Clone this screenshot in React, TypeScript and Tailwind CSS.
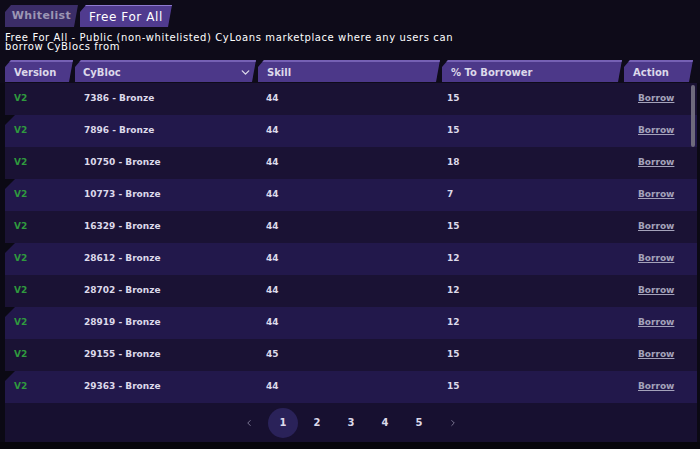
import { ChevronDown, ChevronLeft, ChevronRight } from 'lucide-react'

const rows = [
  { id: '7386', skill: 44, pct: 15 },
  { id: '7896', skill: 44, pct: 15 },
  { id: '10750', skill: 44, pct: 18 },
  { id: '10773', skill: 44, pct: 7 },
  { id: '16329', skill: 44, pct: 15 },
  { id: '28612', skill: 44, pct: 12 },
  { id: '28702', skill: 44, pct: 12 },
  { id: '28919', skill: 44, pct: 12 },
  { id: '29155', skill: 45, pct: 15 },
  { id: '29363', skill: 44, pct: 15 },
]

const cut = '[clip-path:polygon(6px_0,100%_0,calc(100%-4px)_100%,0_100%,0_7px)]'

export default function App() {
  return (
    <div className="h-[449px] w-[700px] overflow-hidden bg-[#07060c] text-[#dcd9ea] [font-family:'DejaVu_Sans',sans-serif]">
      <div className="bg-[#0e0b19] pt-[5px]">
        {/* tabs */}
        <div className="flex gap-[2px] pl-[5px]">
          <button className={`h-[22px] w-[73px] bg-[#3b2d68] text-[11px] font-bold tracking-[0.4px] text-[#9c96b4] ${cut}`}>
            Whitelist
          </button>
          <button className={`h-[22px] w-[92px] border-t border-[#8f7ad0] bg-[#503b8f] text-[12px] tracking-[0.6px] text-white ${cut}`}>
            Free For All
          </button>
        </div>

        <p className="mt-[6px] w-[462px] pl-[5px] text-[10px] leading-[9px] tracking-[0.6px] text-white">
          Free For All - Public (non-whitelisted) CyLoans marketplace where any users can borrow CyBlocs from
        </p>

        {/* header */}
        <div className="mt-[9px] grid grid-cols-[68px_181px_182px_180px_69px] gap-[2px] pl-[5px] pr-[3px] text-[10px] font-bold">
          <div className={`flex h-[22px] items-center border-t-2 border-[#7560b4] bg-[#4c3889] pl-[9px] ${cut}`}>Version</div>
          <div className={`flex h-[22px] items-center justify-between border-t-2 border-[#7560b4] bg-[#4c3889] pl-[8px] pr-[4px] ${cut}`}>
            <span>CyBloc</span>
            <ChevronDown size={13} strokeWidth={2.5} />
          </div>
          <div className={`flex h-[22px] items-center border-t-2 border-[#7560b4] bg-[#4c3889] pl-[9px] ${cut}`}>Skill</div>
          <div className={`flex h-[22px] items-center border-t-2 border-[#7560b4] bg-[#4c3889] pl-[9px] ${cut}`}>% To Borrower</div>
          <div className={`flex h-[22px] items-center border-t-2 border-[#7560b4] bg-[#4c3889] pl-[9px] ${cut}`}>Action</div>
        </div>

        <div className="mt-px bg-[#0b0914] pl-[5px] pr-[3px]">
          {/* rows */}
          <div className="relative">
            {rows.map((r, i) => (
              <div
                key={r.id}
                className={`grid h-[32px] grid-cols-[70px_183px_184px_180px_1fr] items-center text-[9px] font-bold ${
                  i % 2 === 1 ? 'bg-[#22184b] [clip-path:polygon(10px_0,100%_0,100%_100%,0_100%,0_10px)]' : 'bg-[#1a1234]'
                }`}
              >
                <span className="pl-[9px] text-[#2f9a3e]">V2</span>
                <span className="pl-[9px]">{r.id} - Bronze</span>
                <span className="pl-[8px]">{r.skill}</span>
                <span className="pl-[5px]">{r.pct}</span>
                <span className="pl-[16px] text-[#a4a2ba] underline">Borrow</span>
              </div>
            ))}
            <div className="absolute right-[2px] top-[2px] h-[62px] w-[4px] rounded-full bg-[#6e6a7c]" />
          </div>

          {/* pagination */}
          <div className="flex h-[39px] items-center justify-center gap-[4px] bg-[#171030] text-[10px] font-bold">
            <span className="flex w-[30px] justify-center text-[#8d88a3]"><ChevronLeft size={10} /></span>
            <span className="flex h-[30px] w-[30px] items-center justify-center rounded-full bg-[#2a2259]">1</span>
            <span className="flex w-[30px] justify-center">2</span>
            <span className="flex w-[30px] justify-center">3</span>
            <span className="flex w-[30px] justify-center">4</span>
            <span className="flex w-[30px] justify-center">5</span>
            <span className="flex w-[30px] justify-center text-[#8d88a3]"><ChevronRight size={10} /></span>
          </div>
        </div>
      </div>
    </div>
  )
}
